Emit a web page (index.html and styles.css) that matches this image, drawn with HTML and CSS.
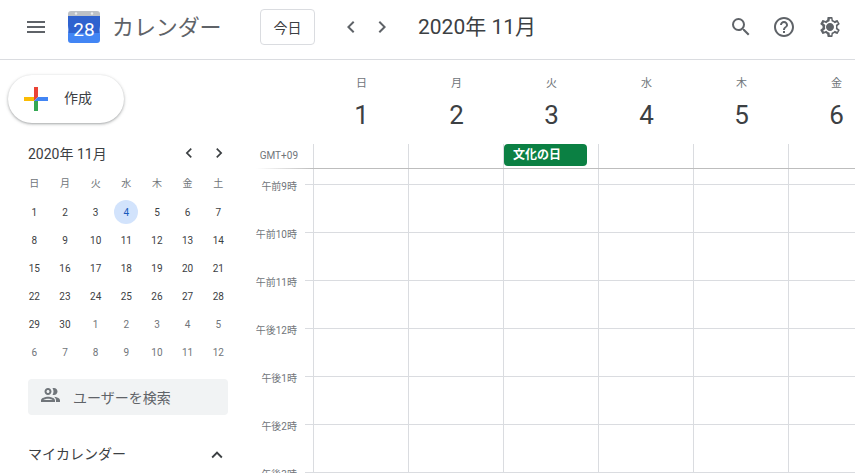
FILE: index.html
```html
<!DOCTYPE html>
<html lang="ja">
<head>
<meta charset="utf-8">
<title>カレンダー</title>
<link rel="stylesheet" href="styles.css">
</head>
<body>
<div class="app">
  <header class="topbar">
    <svg class="icon menu" viewBox="0 0 24 24"><path d="M3 18h18v-2H3v2zm0-5h18v-2H3v2zm0-7v2h18V6H3z"/></svg>
    <div class="logo">
      <svg viewBox="0 0 32 32" class="logo-art">
        <path d="M3 0h26q3 0 3 3v5H0V3q0-3 3-3z" fill="#bdc1c6"/>
        <circle cx="8" cy="2.5" r="1.2" fill="#eceff1"/><circle cx="24" cy="2.5" r="1.2" fill="#eceff1"/>
        <path d="M0 5h32v9q-1 5 0 9v6q0 3-3 3H3q-3 0-3-3v-6q1-4 0-9z" fill="#4285f4"/>
        <path d="M0 5h32v9q-1 4-.5 8H.5Q1 18 0 14z" fill="#2f62cf"/>
      </svg>
      <span class="logo-day">28</span>
    </div>
    <span class="product">カレンダー</span>
    <button class="today">今日</button>
    <div class="nav">
      <svg class="icon chev" viewBox="0 0 24 24"><path d="M15.41 7.41 14 6l-6 6 6 6 1.41-1.41L10.83 12z"/></svg>
      <svg class="icon chev" viewBox="0 0 24 24"><path d="M10 6 8.59 7.41 13.17 12l-4.58 4.59L10 18l6-6z"/></svg>
    </div>
    <h1 class="period">2020年 11月</h1>
    <div class="actions">
      <svg class="icon" viewBox="0 0 24 24"><path d="M15.5 14h-.79l-.28-.27A6.47 6.47 0 0 0 16 9.5 6.5 6.5 0 1 0 9.5 16c1.61 0 3.09-.59 4.23-1.57l.27.28v.79l5 4.99L20.49 19l-4.99-5zm-6 0C7.01 14 5 11.99 5 9.5S7.01 5 9.5 5 14 7.01 14 9.5 11.99 14 9.5 14z"/></svg>
      <svg class="icon" viewBox="0 0 24 24"><path d="M11 18h2v-2h-2v2zm1-16C6.48 2 2 6.48 2 12s4.48 10 10 10 10-4.48 10-10S17.52 2 12 2zm0 18c-4.41 0-8-3.59-8-8s3.59-8 8-8 8 3.59 8 8-3.59 8-8 8zm0-14c-2.21 0-4 1.79-4 4h2c0-1.1.9-2 2-2s2 .9 2 2c0 2-3 1.75-3 5h2c0-2.25 3-2.5 3-5 0-2.21-1.79-4-4-4z"/></svg>
      <svg class="icon gear" viewBox="0 0 24 24"><path d="M19.43 12.98c.04-.32.07-.64.07-.98s-.03-.66-.07-.98l2.11-1.65c.19-.15.24-.42.12-.64l-2-3.46c-.12-.22-.39-.3-.61-.22l-2.49 1c-.52-.4-1.08-.73-1.69-.98l-.38-2.65A.488.488 0 0 0 14 2h-4c-.25 0-.46.18-.49.42l-.38 2.65c-.61.25-1.17.59-1.69.98l-2.49-1c-.23-.09-.49 0-.61.22l-2 3.46c-.13.22-.07.49.12.64l2.11 1.65c-.04.32-.07.65-.07.98s.03.66.07.98l-2.11 1.65c-.19.15-.24.42-.12.64l2 3.46c.12.22.39.3.61.22l2.49-1c.52.4 1.08.73 1.69.98l.38 2.65c.03.24.24.42.49.42h4c.25 0 .46-.18.49-.42l.38-2.65c.61-.25 1.17-.59 1.69-.98l2.49 1c.23.09.49 0 .61-.22l2-3.46c.12-.22.07-.49-.12-.64l-2.11-1.65zM18 11.13c.05.4.06.66.06.87s-.02.49-.06.87l-.14 1.13.89.7 1.08.84-.7 1.21-1.27-.51-1.04-.42-.9.68c-.43.32-.84.56-1.25.73l-1.06.43-.16 1.13-.2 1.35h-1.4l-.19-1.35-.16-1.13-1.06-.43c-.43-.18-.83-.41-1.23-.71l-.91-.7-1.06.43-1.27.51-.7-1.21 1.08-.84.89-.7-.14-1.13c-.03-.31-.05-.65-.05-.88s.02-.57.06-.87l.14-1.13-.89-.7-1.08-.84.7-1.21 1.27.51 1.04.42.9-.68c.43-.32.84-.56 1.25-.73l1.06-.43.16-1.13.2-1.35h1.39l.19 1.35.16 1.13 1.06.43c.43.18.83.41 1.23.71l.91.7 1.06-.43 1.27-.51.7 1.21-1.07.85-.89.7.14 1.13zM12 8c-2.21 0-4 1.79-4 4s1.79 4 4 4 4-1.79 4-4-1.79-4-4-4z"/></svg>
    </div>
  </header>

  <div class="content">
    <aside class="sidebar">
      <button class="create">
        <svg class="plus" viewBox="0 0 24 24">
          <path d="M10 0h4v10h-4z" fill="#ea4335"/>
          <path d="M0 10h10v4H0z" fill="#fbbc04"/>
          <path d="M14 10h10v4H14z" fill="#4285f4"/>
          <path d="M10 14h4v10h-4z" fill="#34a853"/>
          <path d="M10 10h4l-4 4z" fill="#ea4335"/>
          <path d="M14 10v4h-4z" fill="#4285f4"/>
        </svg>
        <span class="create-label">作成</span>
      </button>

      <section class="mini">
        <div class="mini-head">
          <span class="mini-title">2020年 11月</span>
          <svg class="icon mini-chev" viewBox="0 0 24 24"><path d="M15.41 7.41 14 6l-6 6 6 6 1.41-1.41L10.83 12z"/></svg>
          <svg class="icon mini-chev" viewBox="0 0 24 24"><path d="M10 6 8.59 7.41 13.17 12l-4.58 4.59L10 18l6-6z"/></svg>
        </div>
        <div class="mini-grid">
          <span class="wd">日</span><span class="wd">月</span><span class="wd">火</span><span class="wd">水</span><span class="wd">木</span><span class="wd">金</span><span class="wd">土</span>
          <span>1</span><span>2</span><span>3</span><span class="selected">4</span><span>5</span><span>6</span><span>7</span>
          <span>8</span><span>9</span><span>10</span><span>11</span><span>12</span><span>13</span><span>14</span>
          <span>15</span><span>16</span><span>17</span><span>18</span><span>19</span><span>20</span><span>21</span>
          <span>22</span><span>23</span><span>24</span><span>25</span><span>26</span><span>27</span><span>28</span>
          <span>29</span><span>30</span><span class="other">1</span><span class="other">2</span><span class="other">3</span><span class="other">4</span><span class="other">5</span>
          <span class="other">6</span><span class="other">7</span><span class="other">8</span><span class="other">9</span><span class="other">10</span><span class="other">11</span><span class="other">12</span>
        </div>
      </section>

      <div class="people">
        <svg class="people-icon" viewBox="0 0 24 24"><path d="M9 12c1.93 0 3.5-1.57 3.5-3.5S10.93 5 9 5 5.500 6.570 5.500 8.500 7.070 12 9 12zm0-5c.83 0 1.500.67 1.500 1.500S9.830 10 9 10s-1.500-.67-1.500-1.500S8.170 7 9 7zm0 6.750c-2.340 0-7 1.170-7 3.500V19h14v-1.750c0-2.330-4.660-3.500-7-3.500zM4.340 17c.84-.58 2.870-1.250 4.660-1.250s3.820.67 4.660 1.250H4.340zM15.040 13.810c1.160.84 1.960 1.960 1.960 3.440V19h4v-1.750c0-2.020-3.500-3.170-5.960-3.440zM15 12c1.930 0 3.500-1.570 3.500-3.500S16.930 5 15 5c-.54 0-1.040.13-1.500.35.630.89 1 1.980 1 3.150s-.37 2.260-1 3.150c.46.220.96.350 1.500.35z"/></svg>
        <span class="people-label">ユーザーを検索</span>
      </div>

      <div class="mycal">
        <span class="mycal-label">マイカレンダー</span>
        <svg class="icon up" viewBox="0 0 24 24"><path d="M12 8l-6 6 1.41 1.410L12 10.830l4.590 4.580L18 14z"/></svg>
      </div>
    </aside>

    <main class="main">
      <div class="days">
        <div class="day"><span class="day-name">日</span><span class="day-num">1</span></div>
        <div class="day"><span class="day-name">月</span><span class="day-num">2</span></div>
        <div class="day"><span class="day-name">火</span><span class="day-num">3</span></div>
        <div class="day"><span class="day-name">水</span><span class="day-num">4</span></div>
        <div class="day"><span class="day-name">木</span><span class="day-num">5</span></div>
        <div class="day"><span class="day-name">金</span><span class="day-num">6</span></div>
      </div>
      <div class="allday">
        <span class="tz">GMT+09</span>
        <div class="allday-cells">
          <div class="event">文化の日</div>
        </div>
      </div>
      <div class="gap"></div>
      <div class="hour"><span class="hour-label">午前9時</span><div class="hour-line"></div></div>
      <div class="hour"><span class="hour-label">午前10時</span><div class="hour-line"></div></div>
      <div class="hour"><span class="hour-label">午前11時</span><div class="hour-line"></div></div>
      <div class="hour"><span class="hour-label">午後12時</span><div class="hour-line"></div></div>
      <div class="hour"><span class="hour-label">午後1時</span><div class="hour-line"></div></div>
      <div class="hour"><span class="hour-label">午後2時</span><div class="hour-line"></div></div>
      <div class="hour"><span class="hour-label">午後3時</span><div class="hour-line"></div></div>
    </main>
  </div>
</div>
</body>
</html>
```

FILE: styles.css
```css
* { box-sizing: border-box; }
html, body { margin: 0; height: 100%; overflow: hidden; background: #fff; }
body { font-family: Roboto, "Noto Sans CJK JP", sans-serif; color: #3c4043; }

.app { width: 855px; height: 473px; display: flex; flex-direction: column; overflow: hidden; }

.icon { width: 24px; height: 24px; fill: #5f6368; flex: none; display: block; }

.topbar { height: 60px; flex: none; display: flex; align-items: center; border-bottom: 1px solid #dadce0; padding: 0 13px 5px 24px; }
.menu { margin-right: 20px; }
.logo { position: relative; width: 32px; height: 32px; flex: none; margin-right: 12px; }
.logo-art { width: 32px; height: 32px; display: block; }
.logo-day { position: absolute; left: 0; right: 0; top: 8px; text-align: center; color: #fff; font-size: 19px; line-height: 22px; }
.product { font-size: 22px; line-height: 32px; color: #5f6368; width: 148px; flex: none; letter-spacing: -.1px; padding-top: 1px; }
.today { width: 55px; height: 36px; flex: none; margin: 0 24px 0 0; padding: 0; background: #fff; border: 1px solid #dadce0; border-radius: 4px; color: #3c4043; font: 14px Roboto, "Noto Sans CJK JP", sans-serif; }
.nav { display: flex; gap: 7px; margin-right: 24px; }
.period { margin: 0; font-size: 21px; font-weight: 400; line-height: 32px; color: #3c4043; white-space: nowrap; }
.actions { margin-left: auto; display: flex; gap: 19px; }
.gear { margin-left: 3px; }

.content { flex: 1; display: flex; min-height: 0; }

.sidebar { width: 248px; flex: none; padding-top: 15px; }
.create { width: 116px; height: 48px; margin-left: 8px; padding: 0 0 0 16px; display: flex; align-items: center; gap: 16px; background: #fff; border: 0; border-radius: 24px; box-shadow: 0 1px 2px 0 rgba(60,64,67,.3), 0 1px 3px 1px rgba(60,64,67,.15); color: #3c4043; font: 14px Roboto, "Noto Sans CJK JP", sans-serif; }
.create-label { padding-bottom: 4px; }
.plus { width: 24px; height: 24px; flex: none; }

.mini { margin: 18px 0 0 19px; width: 217px; }
.mini-head { height: 24px; display: flex; align-items: center; padding: 0 7px 0 9px; }
.mini-title { flex: 1; font-size: 14px; color: #3c4043; white-space: nowrap; }
.mini-chev { width: 20px; height: 20px; fill: #3c4043; margin-right: 10px; }
.mini-chev:last-child { margin-right: 0; }
.mini-grid { margin-top: 5px; display: grid; grid-template-columns: repeat(7, 30.67px); grid-auto-rows: 28px; font-size: 10px; font-weight: 400; color: #3c4043; }
.mini-grid span { display: flex; align-items: center; justify-content: center; }
.mini-grid .wd { color: #70757a; height: 24px; }
.mini-grid .other { color: #70757a; }
.mini-grid .selected { width: 24px; height: 24px; justify-self: center; align-self: center; border-radius: 50%; background: #d2e3fc; color: #185abc; }

.people { margin: 13px 0 0 28px; width: 200px; height: 36px; display: flex; align-items: center; background: #f1f3f4; border-radius: 4px; padding-left: 11px; font-size: 14px; color: #5f6368; }
.people-icon { width: 24px; height: 24px; fill: #70757a; margin: -4px 10px 0 0; flex: none; }

.mycal { margin: 28px 0 0 28px; width: 200px; height: 24px; display: flex; align-items: center; justify-content: space-between; font-size: 14px; color: #3c4043; }
.mycal-label { padding-bottom: 4px; }
.up { width: 22px; height: 22px; fill: #3c4043; }

.main { flex: 1; min-width: 0; overflow: hidden; }
.days { height: 84px; display: flex; padding-left: 66px; }
.day { width: 95px; flex: none; display: flex; flex-direction: column; align-items: center; padding-top: 16px; }
.day-name { font-size: 11px; line-height: 16px; color: #70757a; }
.day-num { font-size: 26px; line-height: 32px; margin-top: 7px; color: #3c4043; }

.allday { height: 25px; display: flex; position: relative; }
.allday::after { content: ""; position: absolute; left: 8px; right: 0; bottom: 0; height: 1px; background: linear-gradient(90deg, rgba(189,189,189,0), #bdbdbd 57px); }
.tz { width: 65px; flex: none; padding: 5px 15px 0 0; text-align: right; font-size: 10px; line-height: 14px; color: #70757a; }
.allday-cells { flex: 1; height: 25px; padding-left: 191px; background: linear-gradient(90deg, #dadce0 1px, transparent 1px) 0 0 / 95px 100%; }
.event { width: 83px; height: 22px; background: #0b8043; color: #fff; border-radius: 4px; font-size: 12px; font-weight: 700; line-height: 22px; padding-left: 9px; }

.gap { height: 15px; margin-left: 65px; background: linear-gradient(90deg, #dadce0 1px, transparent 1px) 0 0 / 95px 100%; }

.hour { height: 48px; display: flex; }
.hour-label { width: 57px; flex: none; padding-right: 8px; text-align: right; font-size: 10px; line-height: 14px; height: 14px; margin-top: -4px; color: #70757a; white-space: nowrap; }
.hour-line { flex: 1; border-top: 1px solid #dadce0; background: linear-gradient(90deg, #dadce0 1px, transparent 1px) 8px 0 / 95px 100%; }
```
